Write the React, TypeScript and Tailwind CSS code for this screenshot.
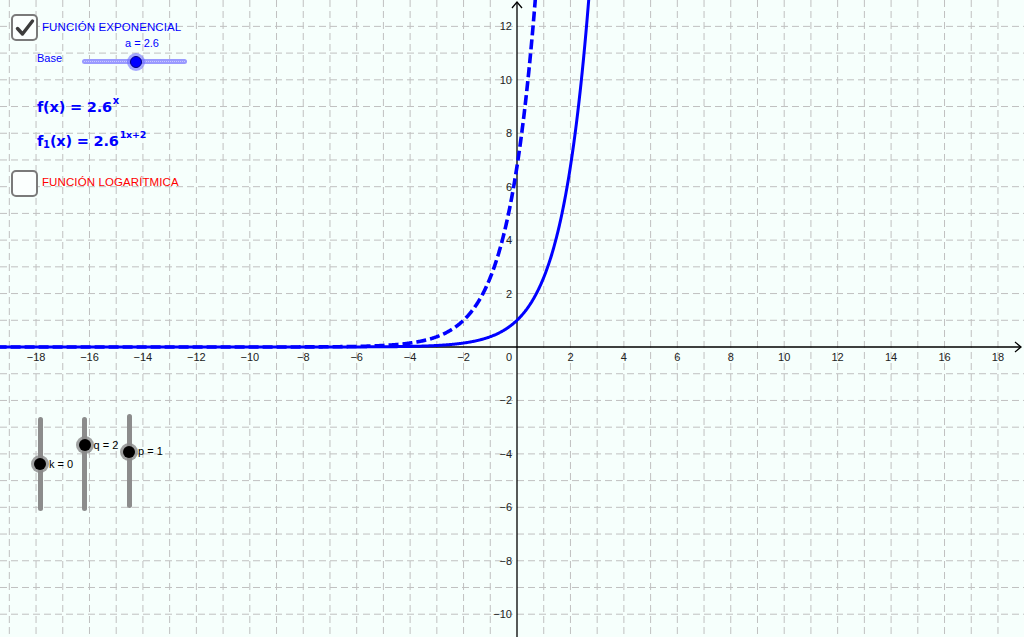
import React from "react";

const S = 26.72;
const OX = 517;
const OY = 347;
const W = 1024;
const H = 637;

function curvePath(shift: number) {
  const pts: string[] = [];
  const maxY = OY / S + 0.3;
  for (let x = -20; x <= 5; x += 0.02) {
    const y = Math.pow(2.6, x + shift);
    if (y > maxY) {
      const xe = Math.log(maxY) / Math.log(2.6) - shift;
      pts.push(`${(OX + xe * S).toFixed(2)},${(OY - maxY * S).toFixed(2)}`);
      break;
    }
    pts.push(`${(OX + x * S).toFixed(2)},${(OY - y * S).toFixed(2)}`);
  }
  return "M" + pts.join(" L");
}

function Graph() {
  const vlines: number[] = [];
  const hlines: number[] = [];
  for (let i = -20; i <= 20; i++) {
    if (i === 0) continue;
    const x = OX + i * S;
    if (x >= 0 && x <= W) vlines.push(x);
    const y = OY + i * S;
    if (y >= 0 && y <= H) hlines.push(y);
  }
  const xLabels: number[] = [];
  for (let i = -18; i <= 18; i += 2) if (i !== 0) xLabels.push(i);
  const yLabels = [12, 10, 8, 6, 4, 2, -2, -4, -6, -8, -10];
  const fmt = (n: number) => (n < 0 ? "\u2212" + Math.abs(n) : String(n));
  return (
    <svg width={W} height={H} className="absolute inset-0">
      <g stroke="#c0c0c0" strokeWidth="1" strokeDasharray="7 4">
        {vlines.map((x) => (
          <line key={"v" + x} x1={x} y1={0} x2={x} y2={H} />
        ))}
        {hlines.map((y) => (
          <line key={"h" + y} x1={0} y1={y} x2={W} y2={y} />
        ))}
      </g>
      <g stroke="#000" strokeWidth="1.3" fill="none">
        <line x1={0} y1={OY} x2={1021} y2={OY} />
        <path d={`M1015,${OY - 5} L1021,${OY} L1015,${OY + 5}`} />
        <line x1={OX} y1={H} x2={OX} y2={2} />
        <path d={`M${OX - 5},8 L${OX},2 L${OX + 5},8`} />
      </g>
      <g
        fontFamily="'Liberation Sans', Arial, sans-serif"
        fontSize="11"
        fill="#222"
      >
        {xLabels.map((n) => (
          <text key={"xl" + n} x={OX + n * S} y={OY + 14} textAnchor="middle">
            {fmt(n)}
          </text>
        ))}
        <text x={OX - 5} y={OY + 14} textAnchor="end">
          0
        </text>
        {yLabels.map((n) => (
          <text key={"yl" + n} x={OX - 5} y={OY - n * S + 4} textAnchor="end">
            {fmt(n)}
          </text>
        ))}
      </g>
      <path
        d={curvePath(2)}
        stroke="#0000ff"
        strokeWidth="3.6"
        fill="none"
        strokeDasharray="10 4"
      />
      <path d={curvePath(0)} stroke="#0000ff" strokeWidth="3" fill="none" />
    </svg>
  );
}

function VSlider({
  offset,
  value,
  min,
  max,
  label,
}: {
  offset: number;
  value: number;
  min: number;
  max: number;
  label: string;
}) {
  const len = 94;
  const frac = (value - min) / (max - min);
  const knob = len * (1 - frac);
  return (
    <div className="relative w-[44.5px] h-[100px]" style={{ paddingTop: offset }}>
      <div className="ml-[6.5px] h-[94px] w-[5px] rounded-full bg-[#8c8c8c]" />
      <div
        className="absolute left-0 flex items-center"
        style={{ top: offset + knob - 9 }}
      >
        <div className="h-[18px] w-[18px] rounded-full bg-[#8a8a8a]/80 flex items-center justify-center">
          <div className="h-[12px] w-[12px] rounded-full bg-black" />
        </div>
        <span className="text-[11px] leading-none text-black whitespace-nowrap">
          {label}
        </span>
      </div>
    </div>
  );
}

function Checkbox({ checked }: { checked: boolean }) {
  return (
    <div className="h-[27px] w-[27px] shrink-0 rounded-[5px] border-2 border-[#7a7a7a] bg-[#fbfffe] flex items-center justify-center">
      {checked && (
        <svg width="22" height="22" viewBox="0 0 22 22">
          <path
            d="M3.5 11.5 L8.5 17 L18.5 4"
            stroke="#3c3c3c"
            strokeWidth="3.4"
            fill="none"
            strokeLinecap="round"
            strokeLinejoin="round"
          />
        </svg>
      )}
    </div>
  );
}

export default function App() {
  return (
    <div className="relative w-[1024px] h-[637px] overflow-hidden bg-[#f6fffc] font-['Liberation_Sans',Arial,sans-serif]">
      <Graph />

      {/* top-left control panel */}
      <div className="absolute left-[11px] top-[14px] flex flex-col">
        <div className="flex items-center gap-[4px]">
          <Checkbox checked />
          <span className="text-[11.5px] leading-none text-[#0000ff] tracking-[0.1px]">
            FUNCIÓN EXPONENCIAL
          </span>
        </div>

        {/* Base slider */}
        <div className="flex items-end pl-[26px] -mt-[3px]">
          <span className="relative top-[0px] text-[11px] leading-none text-[#0000ff] w-[45px]">
            Base
          </span>
          <div className="flex flex-col w-[105px]">
            <span className="text-[11px] leading-none text-[#0000ff] pl-[43px]">
              a = 2.6
            </span>
            <div className="relative mt-[10px] h-[5px] rounded-full bg-[#9a9aff] flex items-center px-[2px]">
              <div className="w-full border-t border-dotted border-[#c8c8ff]" />
              <div className="absolute left-[45px] -top-[6.5px] h-[18px] w-[18px] rounded-full bg-[#6f6fff]/60 flex items-center justify-center">
                <div className="h-[12px] w-[12px] rounded-full bg-[#0000ff] border border-[#000080]" />
              </div>
            </div>
          </div>
        </div>

        {/* formulas */}
        <div className="flex flex-col gap-[19.5px] pl-[26px] mt-[36px] text-[14.5px] leading-none font-bold text-[#0000ff] font-['DejaVu_Sans',sans-serif] tracking-[-0.2px]">
          <div className="whitespace-nowrap">
            f(x) = 2.6
            <span className="text-[10px] relative -top-[8px] ml-[1px]">x</span>
          </div>
          <div className="whitespace-nowrap">
            f<span className="text-[10px] relative top-[2px]">1</span>(x) = 2.6
            <span className="text-[9.5px] relative -top-[8px] ml-[1px]">1x+2</span>
          </div>
        </div>

        <div className="flex items-center gap-[4px] mt-[21px]">
          <Checkbox checked={false} />
          <span className="text-[11.5px] leading-none text-[#ff0000] tracking-[0.1px]">
            FUNCIÓN LOGARÍTMICA
          </span>
        </div>
      </div>

      {/* vertical sliders */}
      <div className="absolute left-[31px] top-[414px] flex items-start">
        <VSlider offset={3} value={0} min={-5} max={5} label="k = 0" />
        <VSlider offset={3} value={2} min={-5} max={5} label="q = 2" />
        <VSlider offset={0} value={1} min={-5} max={5} label="p = 1" />
      </div>
    </div>
  );
}
